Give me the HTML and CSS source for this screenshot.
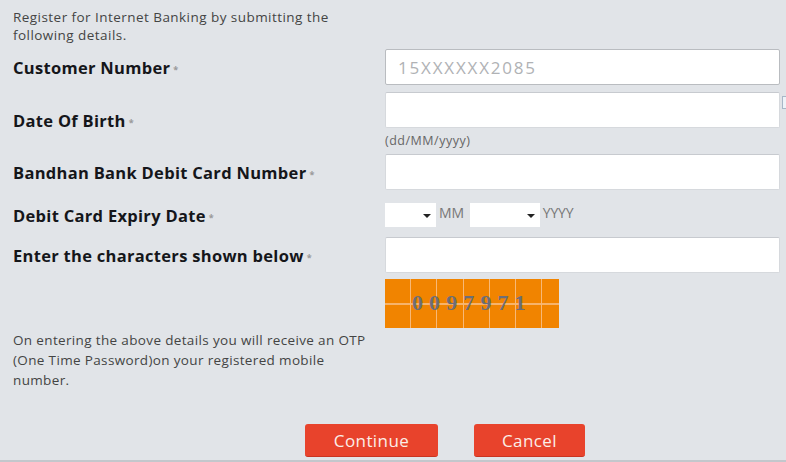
FILE: index.html
```html
<!DOCTYPE html>
<html lang="en">
<head>
    <meta charset="UTF-8">
    <meta name="viewport" content="width=device-width, initial-scale=1.0">
    <title>Internet Banking Registration</title>
    <link rel="stylesheet" href="styles.css">
</head>
<body>
    <div class="page">
        <!-- Intro -->
        <p class="intro">Register for Internet Banking by submitting the<br>following details.</p>

        <!-- Form -->
        <form class="reg-form">
            <div class="row row-customer">
                <label class="label">Customer Number<span class="req">*</span></label>
                <div class="field">
                    <input class="text-input first" type="text" placeholder="15XXXXXX2085">
                </div>
            </div>

            <div class="row row-dob">
                <label class="label">Date Of Birth<span class="req">*</span></label>
                <div class="field">
                    <div class="dob-wrap">
                        <input class="text-input" type="text">
                        <span class="cal-icon"></span>
                    </div>
                    <div class="hint">(dd/MM/yyyy)</div>
                </div>
            </div>

            <div class="row row-card">
                <label class="label">Bandhan Bank Debit Card Number<span class="req">*</span></label>
                <div class="field">
                    <input class="text-input" type="text">
                </div>
            </div>

            <div class="row row-expiry">
                <label class="label">Debit Card Expiry Date<span class="req">*</span></label>
                <div class="field expiry">
                    <div class="select sel-month"><span class="caret"></span></div>
                    <span class="unit unit-mm">MM</span>
                    <div class="select sel-year"><span class="caret"></span></div>
                    <span class="unit">YYYY</span>
                </div>
            </div>

            <div class="row row-captcha">
                <label class="label">Enter the characters shown below<span class="req">*</span></label>
                <div class="field">
                    <input class="text-input" type="text">
                </div>
            </div>

            <div class="row row-image">
                <div class="label"></div>
                <div class="field">
                    <div class="captcha">
                        <div class="cell c1"></div>
                        <div class="cell c2"></div>
                        <div class="cell c3"></div>
                        <div class="cell c4"></div>
                        <div class="cell c5"></div>
                        <div class="cell c6"></div>
                        <div class="cell c7"></div>
                        <span class="captcha-text">0 0 9 7 9 7 1</span>
                    </div>
                </div>
            </div>
        </form>

        <p class="otp-note">On entering the above details you will receive an OTP<br>(One Time Password)on your registered mobile<br>number.</p>

        <!-- Buttons -->
        <div class="actions">
            <button class="btn btn-continue" type="button">Continue</button>
            <button class="btn btn-cancel" type="button">Cancel</button>
        </div>
    </div>
</body>
</html>
```

FILE: styles.css
```css
/* General Styles */
body {
    font-family: "Open Sans", "DejaVu Sans", sans-serif;
    margin: 0;
    padding: 0;
    background-color: #e1e4e8;
    color: #333;
    overflow: hidden;
}

.page {
    height: 460px;
    padding: 0 6px 0 13px;
    border-bottom: 2px solid #c3c7cc;
}

/* Intro */
.intro {
    margin: 0;
    padding-top: 8px;
    font-size: 13.5px;
    line-height: 18px;
    color: #444;
    letter-spacing: 0.45px;
}

/* Form rows */
.reg-form {
    margin-top: 5px;
}

.row {
    display: flex;
    align-items: center;
}

.label {
    width: 372px;
    flex-shrink: 0;
    font-size: 16.5px;
    font-weight: bold;
    color: #15161a;
    letter-spacing: 0.3px;
}

.req {
    font-size: 9px;
    color: #999;
    margin-left: 3px;
    vertical-align: middle;
}

.field {
    flex: 1;
}

.text-input {
    display: block;
    box-sizing: border-box;
    width: 100%;
    height: 36px;
    border: 1px solid #d6d9dd;
    border-top-color: #c7cacf;
    border-radius: 2px;
    background: white;
    padding: 0 12px;
    font-family: inherit;
    font-size: 17px;
    letter-spacing: 1.8px;
    color: #333;
}

.text-input.first {
    border-color: #b9bcc0;
}

.text-input::placeholder {
    color: #b0b2b5;
}

.row-dob {
    margin-top: 7px;
}

.dob-wrap {
    position: relative;
}

.cal-icon {
    position: absolute;
    right: -7px;
    top: 4px;
    width: 4px;
    height: 11px;
    border: 1px solid #a7b7c7;
    border-right: none;
    background: #eef3f8;
}

.hint {
    margin-top: 4px;
    font-size: 12.5px;
    line-height: 17px;
    color: #666;
    letter-spacing: 0.5px;
}

.row-card {
    margin-top: 5px;
}

/* Expiry selects */
.row-expiry {
    margin-top: 13px;
}

.expiry {
    display: flex;
    align-items: center;
    height: 24px;
}

.select {
    display: flex;
    justify-content: flex-end;
    align-items: center;
    box-sizing: border-box;
    height: 24px;
    background: white;
    padding-right: 5px;
}

.sel-month {
    width: 51px;
}

.sel-year {
    width: 70px;
}

.caret {
    width: 0;
    height: 0;
    margin-top: 2px;
    border-left: 4px solid transparent;
    border-right: 4px solid transparent;
    border-top: 4px solid #222;
}

.unit {
    font-size: 14px;
    color: #777;
    margin: -6px 0 0 3px;
    letter-spacing: -0.2px;
}

.unit-mm {
    margin-right: 6px;
}

.row-captcha {
    margin-top: 10px;
}

/* Captcha image */
.row-image {
    margin-top: 6px;
}

.captcha {
    position: relative;
    display: grid;
    grid-template-columns: 25px 26px 27px 26px 26px 26px 18px;
    width: 174px;
    height: 49px;
}

.cell {
    background:
        linear-gradient(#f6b36b, #f6b36b) 0 24px / 100% 2px no-repeat,
        #f18400;
    border-left: 1px solid #f7b877;
}

.cell.c1 {
    border-left: none;
}

.captcha-text {
    position: absolute;
    left: 27px;
    top: 13px;
    font-family: "Liberation Serif", serif;
    font-weight: bold;
    font-size: 22px;
    line-height: 22px;
    color: #6c6e78;
    letter-spacing: 0.3px;
    word-spacing: 0;
}

/* OTP note */
.otp-note {
    margin: 2px 0 0;
    font-size: 13.5px;
    line-height: 20px;
    color: #444;
    letter-spacing: 0.35px;
}

/* Buttons */
.actions {
    display: flex;
    gap: 36px;
    margin-top: 34px;
    padding-left: 292px;
}

.btn {
    height: 33px;
    border: none;
    border-bottom: 1px solid #c93421;
    border-radius: 3px;
    background-color: #e8432c;
    color: #fbeee8;
    font-family: inherit;
    font-size: 17px;
    letter-spacing: 0.4px;
    cursor: pointer;
}

.btn-continue {
    width: 133px;
}

.btn-cancel {
    width: 111px;
}
```
